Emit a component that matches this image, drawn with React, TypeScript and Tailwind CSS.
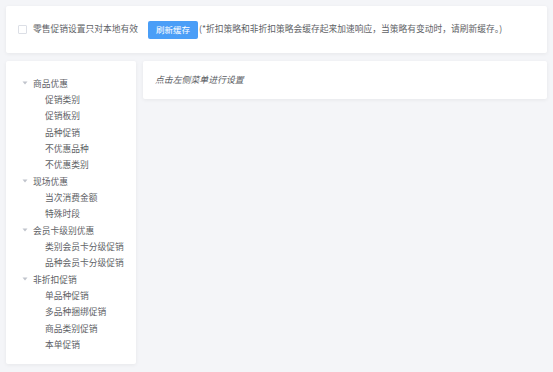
import { useState } from "react";

type TreeNode = { label: string; children?: string[] };

const tree: TreeNode[] = [
    { label: "商品优惠", children: ["促销类别", "促销板别", "品种促销", "不优惠品种", "不优惠类别"] },
    { label: "现场优惠", children: ["当次消费金额", "特殊时段"] },
    { label: "会员卡级别优惠", children: ["类别会员卡分级促销", "品种会员卡分级促销"] },
    { label: "非折扣促销", children: ["单品种促销", "多品种捆绑促销", "商品类别促销", "本单促销"] },
];

const Caret = () => (
    <svg width="6" height="6" viewBox="0 0 6 6" className="shrink-0">
        <path d="M0.5 1.5 L5.5 1.5 L3 4.5 Z" fill="#c0c4cc" />
    </svg>
);

const App = () => {
    const [localOnly, setLocalOnly] = useState(false);

    return (
        <div
            className="w-[553px] h-[372px] bg-[#f4f5f8] p-[6px] flex flex-col gap-[8px] text-[#606266] overflow-hidden"
            style={{ fontFamily: '"Noto Sans CJK SC", "Noto Sans", sans-serif' }}
        >
            {/* top bar */}
            <div className="h-[47px] bg-white rounded-[2px] shadow-[0_1px_4px_rgba(0,0,0,0.06)] flex items-center pl-[12px] text-[8.75px] leading-none">
                <button
                    onClick={ () => setLocalOnly(!localOnly) }
                    className="w-[9px] h-[9px] border border-[#dcdfe6] rounded-[1px] bg-white"
                />
                <span className="ml-[6px]">零售促销设置只对本地有效</span>
                <button className="ml-[10px] w-[50px] h-[18px] bg-[#4a9ef7] rounded-[2px] text-white text-[8.5px]">刷新缓存</button>
                <span className="ml-px">(*折扣策略和非折扣策略会缓存起来加速响应，当策略有变动时，请刷新缓存。)</span>
            </div>

            <div className="flex gap-[7px] items-start">
                {/* menu tree */}
                <div className="w-[130px] h-[303px] bg-white rounded-[2px] shadow-[0_1px_4px_rgba(0,0,0,0.06)] pt-[14px] pl-[16px] text-[8.75px]">
                    { tree.map(node => (
                        <div key={ node.label }>
                            <div className="h-[16.33px] flex items-center gap-[5px]">
                                <Caret />
                                <span>{ node.label }</span>
                            </div>
                            { node.children?.map(c => (
                                <div key={ c } className="h-[16.33px] flex items-center pl-[23px]">{ c }</div>
                            )) }
                        </div>
                    )) }
                </div>

                {/* content */}
                <div className="flex-1 h-[38px] bg-white rounded-[2px] shadow-[0_1px_4px_rgba(0,0,0,0.06)] flex items-center pl-[12px]">
                    <span className="italic text-[8.9px] text-[#5a5d63]">点击左侧菜单进行设置</span>
                </div>
            </div>
        </div>
    );
};

export default App;
